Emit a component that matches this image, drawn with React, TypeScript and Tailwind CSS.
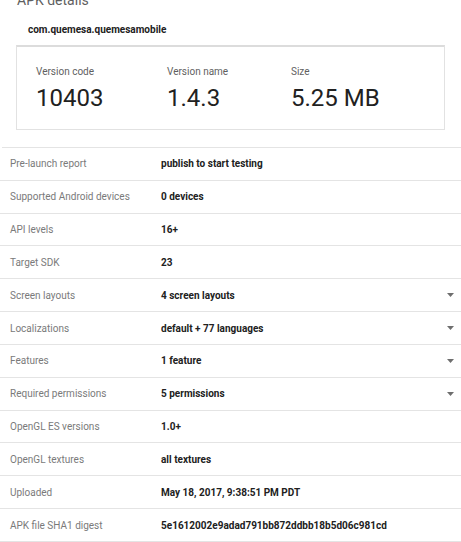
import { ReactNode } from "react";

type Row = { label: string; value: string; expandable?: boolean };

const rows: Row[] = [
  { label: "Pre-launch report", value: "publish to start testing" },
  { label: "Supported Android devices", value: "0 devices" },
  { label: "API levels", value: "16+" },
  { label: "Target SDK", value: "23" },
  { label: "Screen layouts", value: "4 screen layouts", expandable: true },
  { label: "Localizations", value: "default + 77 languages", expandable: true },
  { label: "Features", value: "1 feature", expandable: true },
  { label: "Required permissions", value: "5 permissions", expandable: true },
  { label: "OpenGL ES versions", value: "1.0+" },
  { label: "OpenGL textures", value: "all textures" },
  { label: "Uploaded", value: "May 18, 2017, 9:38:51 PM PDT" },
  { label: "APK file SHA1 digest", value: "5e1612002e9adad791bb872ddbb18b5d06c981cd" },
];

function Stat({ label, children }: { label: string; children: ReactNode }) {
  return (
    <div className="flex flex-col">
      <span className="text-[10px] leading-[12px] text-[#5f5f5f]">{label}</span>
      <span className="mt-[7px] text-[24px] leading-[26px] text-[#212121]">{children}</span>
    </div>
  );
}

function Caret() {
  return (
    <svg width="7" height="4" viewBox="0 0 7 4" className="text-[#6e6e6e]">
      <path d="M0 0h7L3.5 4z" fill="currentColor" />
    </svg>
  );
}

export default function App() {
  return (
    <div className="h-[542px] w-[461px] overflow-hidden bg-white font-['Roboto',sans-serif]">
      <h2 className="mt-[-7px] pl-[17px] text-[14px] leading-[14px] text-[#5f5f5f]">APK details</h2>

      <p className="mt-[17px] pl-[28px] text-[10px] font-bold leading-[12px] text-[#212121]">
        com.quemesa.quemesamobile
      </p>

      <div className="mt-[9px] ml-[16px] h-[85px] w-[429px] border border-t-2 border-[#e2e2e2] border-t-[#dcdcdc] bg-white">
        <div className="grid grid-cols-[131px_124px_1fr] pt-[19px] pl-[19px]">
          <Stat label="Version code">10403</Stat>
          <Stat label="Version name">1.4.3</Stat>
          <Stat label="Size">5.25 MB</Stat>
        </div>
      </div>

      <div className="mt-[17px] ml-[2px] border-t border-[#e4e4e4]">
        {rows.map((row) => (
          <div
            key={row.label}
            className="-ml-[2px] flex h-[32.83px] items-center border-b border-[#e4e4e4] text-[10px]"
          >
            <span className="w-[161px] pl-[10px] text-[#7a7a7a]">{row.label}</span>
            <span className="flex-1 font-bold text-[#212121]">{row.value}</span>
            {row.expandable && (
              <span className="mr-[7px] flex items-center">
                <Caret />
              </span>
            )}
          </div>
        ))}
      </div>
    </div>
  );
}
